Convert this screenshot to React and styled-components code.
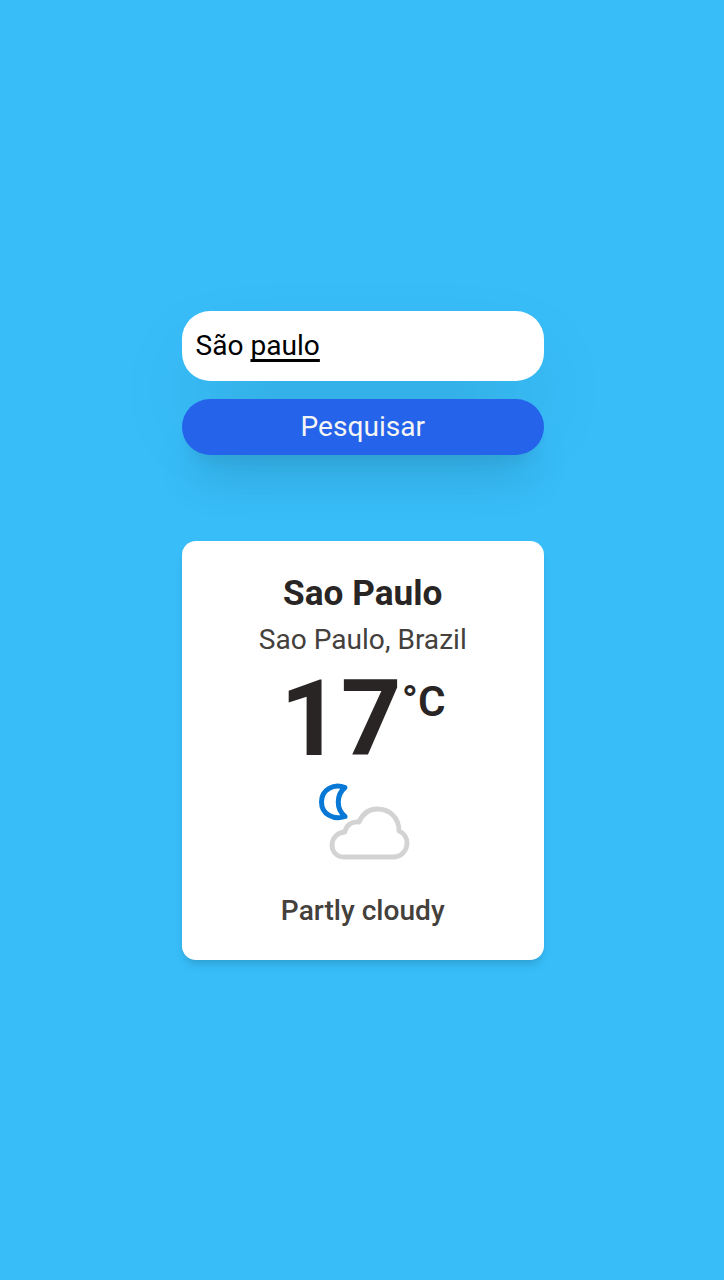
import React from 'react';
import styled, { createGlobalStyle } from 'styled-components';

const GlobalStyle = createGlobalStyle`
  * { box-sizing: border-box; }
  body { margin: 0; font-family: Roboto, sans-serif; }
`;

const Page = styled.main`
  min-height: 1280px;
  display: flex;
  flex-direction: column;
  align-items: center;
  padding: 310.5px 0 0 1.5px;
  background: #38bdf8;
`;

const SearchForm = styled.form`
  width: 362.5px;
  display: flex;
  flex-direction: column;
  gap: 18px;
`;

const SearchField = styled.div`
  height: 70.5px;
  display: flex;
  align-items: center;
  padding: 0 14px;
  border-radius: 28px;
  background: #fff;
  color: #000;
  font-size: 28.1px;
  line-height: 34px;
  white-space: pre;
  box-shadow: 0 44px 88px -21px rgba(0, 0, 0, 0.25);
`;

const Composing = styled.span`
  text-decoration: underline;
  text-decoration-thickness: 3px;
  text-decoration-skip-ink: none;
  text-underline-offset: 4px;
`;

const SearchButton = styled.button`
  height: 56px;
  padding: 0;
  border: 0;
  border-radius: 28px;
  background: #2563eb;
  color: #f5f5f4;
  font: 400 28.1px/56px Roboto, sans-serif;
  box-shadow: 0 35px 44px -9px rgba(0, 0, 0, 0.1), 0 14px 18px -11px rgba(0, 0, 0, 0.1);
`;

const Card = styled.section`
  width: 362.5px;
  height: 419px;
  margin-top: 86px;
  display: flex;
  flex-direction: column;
  align-items: center;
  padding-top: 28px;
  border-radius: 14px;
  background: #fff;
  box-shadow: 0 7px 10px -2px rgba(0, 0, 0, 0.1), 0 4px 7px -4px rgba(0, 0, 0, 0.1);
`;

const City = styled.h1`
  margin: 0;
  color: #292524;
  font-size: 35.2px;
  font-weight: 700;
  line-height: 49px;
`;

const Region = styled.p`
  margin: 0;
  color: #44403c;
  font-size: 28.1px;
  line-height: 44px;
`;

const Temperature = styled.div`
  display: flex;
  align-items: flex-start;
  height: 106px;
  margin-top: 4px;
  color: #292524;
  font-size: 106px;
  font-weight: 700;
  line-height: 106px;
`;

const Unit = styled.span`
  padding-top: 11px;
  font-size: 42.2px;
  font-weight: 600;
  line-height: 50px;
`;

const WeatherIcon = styled.svg`
  width: 113px;
  height: 113px;
  margin-top: -6px;
`;

const Condition = styled.p`
  margin: 11px 0 0;
  color: #44403c;
  font-size: 28.1px;
  font-weight: 500;
  line-height: 42px;
`;

export default function App() {
  return (
    <Page>
      <GlobalStyle />
      <SearchForm>
        <SearchField>São <Composing>paulo</Composing></SearchField>
        <SearchButton type="button">Pesquisar</SearchButton>
      </SearchForm>
      <Card>
        <City>Sao Paulo</City>
        <Region>Sao Paulo, Brazil</Region>
        <Temperature>17<Unit>°C</Unit></Temperature>
        <WeatherIcon viewBox="306 766 113 113" fill="none" strokeLinejoin="round">
          <path d="M345 787.5C334 783 321.5 789.5 321.5 802C321.5 814.5 334 820.5 345 816.5C336 809 336 795 345 787.5Z" stroke="#0878d7" strokeWidth="5" />
          <path d="M344 857C336 857 332 851 332 845C332 838 338 832 345 832C346 825 352 821 359 822C363 813 369 809 377 809C389 809 399 817 399 831C404 833 407 838 407 843C407 851 401 857 393 857Z" stroke="#d3d3d3" strokeWidth="4.8" />
        </WeatherIcon>
        <Condition>Partly cloudy</Condition>
      </Card>
    </Page>
  );
}
